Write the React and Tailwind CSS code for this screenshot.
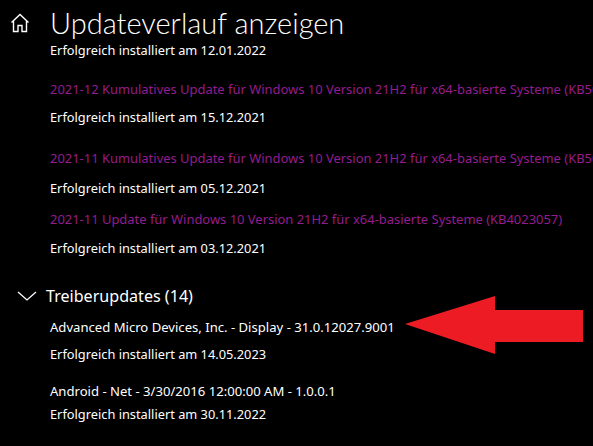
import React from "react";

const font = { fontFamily: '"Noto Sans", "Open Sans", sans-serif' };

function House() {
  return (
    <svg width="20" height="20" viewBox="0 0 20 20" fill="none" stroke="#fff" strokeWidth="1.4" strokeLinejoin="miter">
      <path d="M1.5 9.5 L10 1.5 L18.5 9.5 M3.5 7.8 V18.5 H8 V12.5 H12 V18.5 H16.5 V7.8" />
    </svg>
  );
}

function Chevron() {
  return (
    <svg width="20" height="10" viewBox="0 0 20 10" fill="none" stroke="#fff" strokeWidth="1.3">
      <path d="M1 1 L10 9 L19 1" />
    </svg>
  );
}

function Arrow() {
  return (
    <svg width="180" height="60" viewBox="0 0 180 60" className="absolute left-[405px] top-[295px]">
      <path d="M0 29 L90 1 L90 15 L178 15 L178 47 L90 47 L90 59 Z" fill="#ed1c24" />
    </svg>
  );
}

const W = "text-white text-[12.8px] leading-[18px] whitespace-nowrap";
const D = "text-white text-[13.1px] leading-[18px] whitespace-nowrap";
const P = "text-[#951c8f] text-[12.95px] leading-[18px] whitespace-nowrap";

export default function App() {
  return (
    <div className="relative w-[593px] h-[446px] bg-black overflow-hidden" style={font}>
      <div className="flex items-center h-[44px] pt-[1px]">
        <div className="w-[50px] flex justify-start pl-[10px]"><House /></div>
        <div className="text-white text-[29px] font-light leading-[34px] whitespace-nowrap font-['Lato',sans-serif]">Updateverlauf anzeigen</div>
      </div>
      <div className="flex flex-col pl-[50px]">
        <div className={`${W} mt-[-3px]`}>Erfolgreich installiert am 12.01.2022</div>
        <div className={`${P} mt-[21px]`}>2021-12 Kumulatives Update für Windows 10 Version 21H2 für x64-basierte Systeme (KB5009543)</div>
        <div className={`${W} mt-[10px]`}>Erfolgreich installiert am 15.12.2021</div>
        <div className={`${P} mt-[23px]`}>2021-11 Kumulatives Update für Windows 10 Version 21H2 für x64-basierte Systeme (KB5007253)</div>
        <div className={`${W} mt-[12px]`}>Erfolgreich installiert am 05.12.2021</div>
        <div className={`${P} mt-[13px]`}>2021-11 Update für Windows 10 Version 21H2 für x64-basierte Systeme (KB4023057)</div>
        <div className={`${W} mt-[11px]`}>Erfolgreich installiert am 03.12.2021</div>
      </div>
      <div className="flex items-center mt-[27px] h-[24px]">
        <div className="w-[46px] flex pl-[17px]"><Chevron /></div>
        <div className="text-white text-[16.1px] leading-[24px] whitespace-nowrap">Treiberupdates (14)</div>
      </div>
      <div className="flex flex-col pl-[50px]">
        <div className={`${D} mt-[10px]`}>Advanced Micro Devices, Inc. - Display - 31.0.12027.9001</div>
        <div className={`${W} mt-[9px]`}>Erfolgreich installiert am 14.05.2023</div>
        <div className={`${D} mt-[19px]`}>Android - Net - 3/30/2016 12:00:00 AM - 1.0.0.1</div>
        <div className={`${W} mt-[5px]`}>Erfolgreich installiert am 30.11.2022</div>
      </div>
      <Arrow />
    </div>
  );
}
